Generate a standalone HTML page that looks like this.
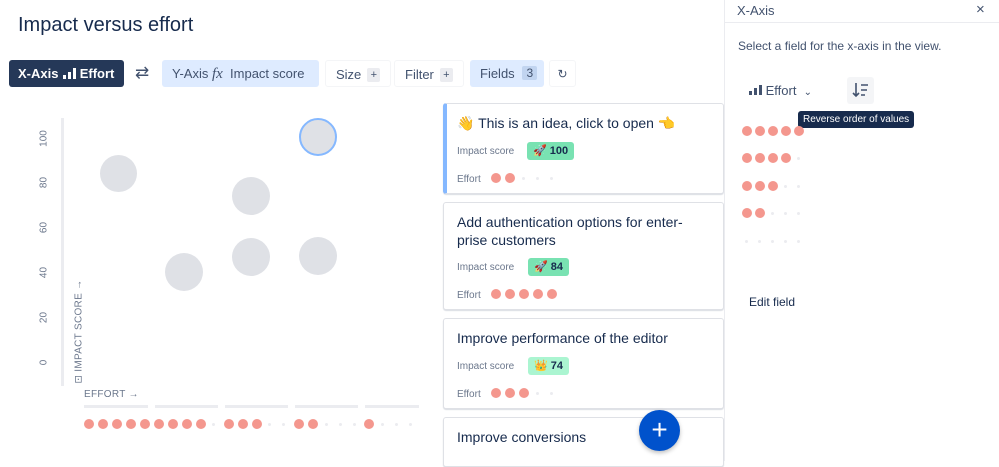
<!DOCTYPE html>
<html><head><meta charset="utf-8"><style>
*{box-sizing:border-box;margin:0;padding:0}
body{width:999px;height:461px;overflow:hidden;background:#fff;font-family:"Liberation Sans",sans-serif;color:#172b4d;position:relative}
.a{position:absolute}
.btn{position:absolute;top:60px;height:27px;border-radius:3px;font-size:13px;line-height:27px;padding:0 10px;color:#42526e;white-space:nowrap}
.plus{display:inline-block;width:13px;height:14px;background:#ebecf0;border-radius:2px;font-size:11px;line-height:14px;text-align:center;margin-left:6px;vertical-align:1px}
.dot{position:absolute;width:10px;height:10px;border-radius:50%;background:#f4978e}
.sd{position:absolute;width:3px;height:3px;border-radius:50%;background:#ebecf0}
.bub{position:absolute;border-radius:50%;background:#dfe1e6}
.card{position:absolute;left:443px;width:281px;border:1px solid #dfe1e6;border-radius:3px;background:#fff;box-shadow:0 1px 1px rgba(9,30,66,.15)}
.t{position:absolute;left:13px;font-size:14px;color:#172b4d;line-height:18px;white-space:nowrap}
.lbl{position:absolute;left:13px;font-size:10px;color:#6b778c}
.badge{position:absolute;left:84px;height:18px;background:#79e2b2;border-radius:3px;font-size:11px;line-height:18px;padding:0 6px;color:#172b4d;font-weight:bold;white-space:nowrap}
.yl{position:absolute;left:34px;font-size:10px;color:#6b778c;transform:rotate(-90deg);width:20px;text-align:center}
.seg{position:absolute;top:405px;height:3px;background:#ebecf0}
</style></head><body>
<div class="a" style="left:18px;top:14px;font-size:20px;color:#172b4d">Impact versus effort</div>

<div class="btn" style="left:9px;width:115px;background:#253858;color:#fff;font-weight:bold;padding:0 9px">X-Axis <svg width="14" height="11" viewBox="0 0 14 11" style="vertical-align:-1px"><rect x="1" y="7" width="3" height="4" fill="#fff"/><rect x="6" y="4" width="3" height="7" fill="#fff"/><rect x="11" y="0" width="3" height="11" fill="#fff"/></svg> Effort</div>
<div class="a" style="left:135px;top:63px;font-size:17px;color:#42526e">⇄</div>
<div class="btn" style="left:162px;width:157px;background:#deebff">Y-Axis <i style="font-family:'Liberation Serif',serif;font-size:15px">fx</i>&nbsp; Impact score</div>
<div class="btn" style="left:325px;border:1px solid #f4f5f7">Size<span class="plus">+</span></div>
<div class="btn" style="left:394px;border:1px solid #f4f5f7">Filter<span class="plus">+</span></div>
<div class="btn" style="left:470px;width:74px;background:#deebff">Fields <span class="plus" style="background:#c1d4f0;width:15px;font-size:12px;margin-left:4px">3</span></div>
<div class="btn" style="left:549px;width:27px;padding:0;text-align:center;border:1px solid #f4f5f7;font-size:12px">↻</div>

<div class="a" style="left:61px;top:118px;width:3px;height:268px;background:#ebecf0"></div>
<div class="yl" style="top:133px">100</div>
<div class="yl" style="top:177px">80</div>
<div class="yl" style="top:222px">60</div>
<div class="yl" style="top:267px">40</div>
<div class="yl" style="top:312px">20</div>
<div class="yl" style="top:357px">0</div>
<div class="a" style="left:24px;top:323px;font-size:10px;color:#6b778c;transform:rotate(-90deg);width:110px;letter-spacing:.3px;white-space:nowrap">⊡ IMPACT SCORE →</div>
<div class="a" style="left:84px;top:389px;font-size:10px;color:#6b778c;letter-spacing:.3px">EFFORT →</div>
<div class="seg" style="left:84px;width:64px"></div>
<div class="seg" style="left:155px;width:63px"></div>
<div class="seg" style="left:225px;width:63px"></div>
<div class="seg" style="left:295px;width:63px"></div>
<div class="seg" style="left:365px;width:54px"></div>

<div class="bub" style="left:100px;top:155px;width:37px;height:37px"></div>
<div class="bub" style="left:165px;top:253px;width:38px;height:38px"></div>
<div class="bub" style="left:232px;top:177px;width:38px;height:38px"></div>
<div class="bub" style="left:232px;top:238px;width:38px;height:38px"></div>
<div class="bub" style="left:299px;top:118px;width:38px;height:38px;border:2px solid #85b8ff"></div>
<div class="bub" style="left:299px;top:237px;width:38px;height:38px"></div>

<div class="dot" style="left:84px;top:419px"></div><div class="dot" style="left:98px;top:419px"></div><div class="dot" style="left:112px;top:419px"></div><div class="dot" style="left:126px;top:419px"></div><div class="dot" style="left:140px;top:419px"></div>
<div class="dot" style="left:154px;top:419px"></div><div class="dot" style="left:168px;top:419px"></div><div class="dot" style="left:182px;top:419px"></div><div class="dot" style="left:196px;top:419px"></div><div class="sd" style="left:212px;top:423px"></div>
<div class="dot" style="left:224px;top:419px"></div><div class="dot" style="left:238px;top:419px"></div><div class="dot" style="left:252px;top:419px"></div><div class="sd" style="left:268px;top:423px"></div><div class="sd" style="left:282px;top:423px"></div>
<div class="dot" style="left:294px;top:419px"></div><div class="dot" style="left:308px;top:419px"></div><div class="sd" style="left:325px;top:423px"></div><div class="sd" style="left:339px;top:423px"></div><div class="sd" style="left:353px;top:423px"></div>
<div class="dot" style="left:364px;top:419px"></div><div class="sd" style="left:381px;top:423px"></div><div class="sd" style="left:395px;top:423px"></div><div class="sd" style="left:409px;top:423px"></div>

<div class="card" style="top:103px;height:91px;border-left:4px solid #85b8ff">
 <div class="t" style="top:10px;left:10px">👋 This is an idea, click to open 👈</div>
 <div class="lbl" style="top:42px;left:10px">Impact score</div>
 <div class="badge" style="top:38px;left:80px">🚀 100</div>
 <div class="lbl" style="top:70px;left:10px">Effort</div>
 <div class="dot" style="left:44px;top:69px"></div><div class="dot" style="left:58px;top:69px"></div>
 <div class="sd" style="left:75px;top:73px"></div><div class="sd" style="left:89px;top:73px"></div><div class="sd" style="left:103px;top:73px"></div>
</div>
<div class="card" style="top:202px;height:108px">
 <div class="t" style="top:10px">Add authentication options for enter-<br>prise customers</div>
 <div class="lbl" style="top:59px">Impact score</div>
 <div class="badge" style="top:55px">🚀 84</div>
 <div class="lbl" style="top:87px">Effort</div>
 <div class="dot" style="left:47px;top:86px"></div><div class="dot" style="left:61px;top:86px"></div><div class="dot" style="left:75px;top:86px"></div><div class="dot" style="left:89px;top:86px"></div><div class="dot" style="left:103px;top:86px"></div>
</div>
<div class="card" style="top:318px;height:91px">
 <div class="t" style="top:10px">Improve performance of the editor</div>
 <div class="lbl" style="top:42px">Impact score</div>
 <div class="badge" style="top:38px;background:#abf5d1">👑 74</div>
 <div class="lbl" style="top:70px">Effort</div>
 <div class="dot" style="left:47px;top:69px"></div><div class="dot" style="left:61px;top:69px"></div><div class="dot" style="left:75px;top:69px"></div>
 <div class="sd" style="left:92px;top:73px"></div><div class="sd" style="left:106px;top:73px"></div>
</div>
<div class="card" style="top:417px;height:50px">
 <div class="t" style="top:10px">Improve conversions</div>
</div>
<div class="a" style="left:639px;top:410px;width:41px;height:41px;border-radius:50%;background:#0052cc;color:#fff;font-size:28px;line-height:39px;text-align:center;box-shadow:0 2px 4px rgba(0,0,0,.25)">+</div>

<div class="a" style="left:724px;top:0;width:275px;height:461px;border-left:1px solid #ebecf0;background:#fff">
 <div class="a" style="left:12px;top:3px;font-size:13px;color:#42526e">X-Axis</div>
 <div class="a" style="left:251px;top:1px;font-size:15px;color:#42526e">×</div>
 <div class="a" style="left:0;top:22px;width:275px;height:1px;background:#ebecf0"></div>
 <div class="a" style="left:13px;top:39px;font-size:12px;color:#42526e">Select a field for the x-axis in the view.</div>
 <div class="a" style="left:24px;top:83px;font-size:13px;color:#42526e;white-space:nowrap"><svg width="13" height="10" viewBox="0 0 13 10"><rect x="0" y="6" width="3" height="4" fill="#42526e"/><rect x="5" y="3" width="3" height="7" fill="#42526e"/><rect x="10" y="0" width="3" height="10" fill="#42526e"/></svg> Effort&nbsp; <span style="font-size:10px">⌄</span></div>
 <div class="a" style="left:122px;top:77px;width:27px;height:27px;background:#f4f5f7;border-radius:3px">
  <svg width="27" height="27" viewBox="0 0 27 27"><path d="M9 6v13M6 16l3 3 3-3M14 8h7M14 13h6M14 18h4" stroke="#42526e" stroke-width="1.6" fill="none"/></svg>
 </div>
 <div class="a" style="left:73px;top:111px;height:17px;background:#172b4d;color:#fff;font-size:10px;line-height:17px;padding:0 5px;border-radius:3px;white-space:nowrap">Reverse order of values</div>
 <div class="dot" style="left:17px;top:126px"></div><div class="dot" style="left:30px;top:126px"></div><div class="dot" style="left:43px;top:126px"></div><div class="dot" style="left:56px;top:126px"></div><div class="dot" style="left:69px;top:126px"></div>
 <div class="dot" style="left:17px;top:153px"></div><div class="dot" style="left:30px;top:153px"></div><div class="dot" style="left:43px;top:153px"></div><div class="dot" style="left:56px;top:153px"></div><div class="sd" style="left:72px;top:157px"></div>
 <div class="dot" style="left:17px;top:181px"></div><div class="dot" style="left:30px;top:181px"></div><div class="dot" style="left:43px;top:181px"></div><div class="sd" style="left:59px;top:185px"></div><div class="sd" style="left:72px;top:185px"></div>
 <div class="dot" style="left:17px;top:208px"></div><div class="dot" style="left:30px;top:208px"></div><div class="sd" style="left:46px;top:212px"></div><div class="sd" style="left:59px;top:212px"></div><div class="sd" style="left:72px;top:212px"></div>
 <div class="sd" style="left:20px;top:240px"></div><div class="sd" style="left:33px;top:240px"></div><div class="sd" style="left:46px;top:240px"></div><div class="sd" style="left:59px;top:240px"></div><div class="sd" style="left:72px;top:240px"></div>
 <div class="a" style="left:24px;top:295px;font-size:12px;color:#172b4d">Edit field</div>
</div>
</body></html>
